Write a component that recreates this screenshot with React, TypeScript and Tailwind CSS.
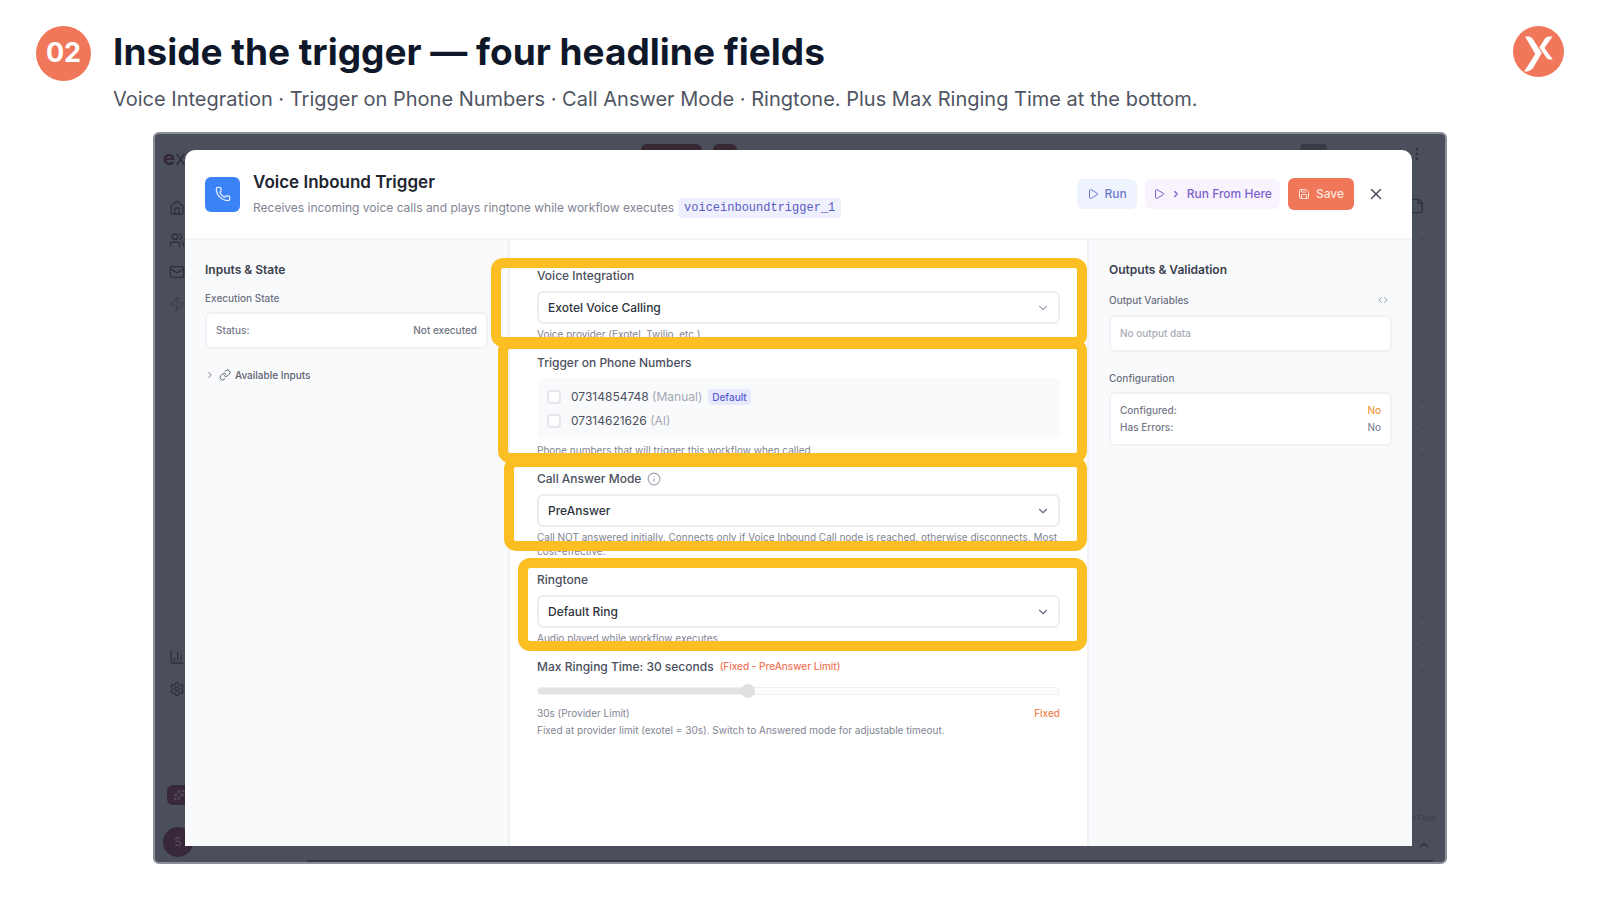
import type { ReactNode } from 'react';
import {
  BarChart3,
  ChevronDown,
  ChevronRight,
  ChevronUp,
  Code,
  EllipsisVertical,
  File,
  House,
  Info,
  Link,
  Mail,
  Phone,
  Play,
  Save,
  Settings,
  Sparkles,
  Users,
  X,
  Zap,
} from 'lucide-react';

interface FieldProps {
  id: string;
  label: string;
  options: string[];
  help: string;
  info?: boolean;
  faded?: boolean;
  ring: string;
}

const numbers = [
  { id: 'manual', number: '07314854748', kind: '(Manual)', isDefault: true },
  { id: 'ai', number: '07314621626', kind: '(AI)', isDefault: false },
];

function Highlight({ className }: { className: string }) {
  return (
    <span
      aria-hidden="true"
      className={`pointer-events-none absolute -right-[27px] rounded-xl border-10 border-[#fbbf24] ${className}`}
    />
  );
}

function SelectField({ id, label, options, help, info, faded, ring }: FieldProps) {
  return (
    <div className="relative">
      <div className="flex h-4 items-center gap-1.5">
        <label htmlFor={id} className="text-xs font-medium text-[#4b5060]">
          {label}
        </label>
        {info && <Info className="size-3.5 text-[#a3a7b3]" />}
      </div>
      <div className="relative mt-[7px]">
        <select
          id={id}
          className="h-[33px] w-full appearance-none rounded-md border-2 border-[#ebecf1] bg-white px-[9px] text-xs font-medium text-[#2f3440]"
        >
          {options.map((o) => (
            <option key={o}>{o}</option>
          ))}
        </select>
        <ChevronDown
          className={`pointer-events-none absolute top-2.5 right-2.5 size-3.5 ${faded ? 'text-[#a3a7b3]' : 'text-[#6b7080]'}`}
        />
      </div>
      <p className="mt-[3px] text-[10px] leading-[14px] text-[#7f8492]">{help}</p>
      <Highlight className={ring} />
    </div>
  );
}

function Row({ label, value, color }: { label: string; value: string; color: string }) {
  return (
    <div className="flex justify-between">
      <span>{label}</span>
      <span className={color}>{value}</span>
    </div>
  );
}

function Card({ children }: { children: ReactNode }) {
  return (
    <div className="rounded-md border-2 border-[#f1f2f5] bg-white px-[9px] py-2 text-[10px] leading-[17px] font-medium text-[#747986]">
      {children}
    </div>
  );
}

// the dimmed app that stays visible around the modal
function Backdrop() {
  return (
    <div
      aria-hidden="true"
      className="absolute inset-0 overflow-hidden rounded-md border-2 border-[#8b8f99] bg-[#4b4f5b] text-[#2f303e]"
    >
      <div className="absolute inset-y-0 left-0 flex w-12 flex-col">
        <span className="mt-2.5 ml-2 text-xl leading-7 font-bold">
          <span className="text-[#33283a]">e</span>
          <span className="font-normal">x</span>
        </span>
        <div className="mt-7 ml-3.5 flex flex-col gap-4">
          <House className="size-4" />
          <Users className="size-4" />
          <Mail className="size-4" />
          <Zap className="size-4 text-[#3d404d]" />
        </div>
        <div className="mt-auto ml-3.5 flex flex-col gap-4">
          <BarChart3 className="size-4" />
          <Settings className="size-4" />
        </div>
        <div className="mt-[88px] ml-3 flex h-5 items-center rounded-md bg-[#37283a] pl-1.5">
          <Sparkles className="size-3 text-[#5b5060]" />
        </div>
        <div className="mt-[22px] mb-[5px] ml-2 flex size-[30px] items-center justify-center rounded-full bg-[#37283a] text-xs text-[#5b5060]">
          S
        </div>
      </div>
      <div className="absolute top-2.5 left-[486px] flex gap-[11px]">
        <span className="h-8 w-[61px] rounded-md bg-[#372833]" />
        <span className="h-8 w-6 rounded-md bg-[#372833]" />
      </div>
      <span className="absolute top-2.5 right-[118px] h-8 w-[27px] rounded-sm bg-[#383b46]" />
      <div className="absolute inset-y-0 right-2 flex w-6 flex-col">
        <EllipsisVertical className="mt-3 -ml-1 size-4" />
        <File className="mt-9 -ml-1 size-4" />
        <div className="mt-6 ml-2 flex flex-col gap-[25px]">
          {Array.from({ length: 17 }, (_, i) => (
            <span key={i} className="size-0.5 rounded-full bg-[#3d404c]" />
          ))}
        </div>
        <span className="mt-auto text-[8px] leading-4 whitespace-nowrap text-[#393c48]">t Flow</span>
        <ChevronUp className="mt-3 mb-2.5 ml-1 size-3.5" />
      </div>
      <span className="absolute right-3 bottom-0 left-[152px] h-0.5 bg-[#363944]" />
    </div>
  );
}

export default function App() {
  return (
    <div className="flex min-h-screen flex-col bg-white pb-9 font-[Inter,sans-serif]">
      <header className="flex items-start px-9 pt-[26px]">
        <span className="flex size-[55px] shrink-0 items-center justify-center rounded-full bg-[#f0775a] text-[27px] font-bold text-white">
          02
        </span>
        <div className="ml-[22px] flex-1">
          <h1 className="text-[37px] leading-[52px] font-bold text-[#0f172a]">
            Inside the trigger — four headline fields
          </h1>
          <p className="mt-2 text-xl leading-[26px] text-[#4f5562]">
            Voice Integration · Trigger on Phone Numbers · Call Answer Mode · Ringtone. Plus Max Ringing Time at the
            bottom.
          </p>
        </div>
        <svg viewBox="0 0 51 51" className="size-[51px] shrink-0" role="img" aria-label="Exotel">
          <circle cx="25.5" cy="25.5" r="25.5" fill="#f0775a" />
          <path d="M12 10.5 H15.5 Q18 10.5 19.5 12.5 L28.8 27 L20 42 Q17.5 45.5 11 45.8 L22.3 28 Z" fill="#fff" />
          <path d="M39.5 10.5 L31.5 22 L39.8 33.5 H36.8 Q34.5 33.5 33 31 L26.3 21.5 L32 12.5 Q33.5 10.5 36 10.5 Z" fill="#fff" />
        </svg>
      </header>

      <main className="relative mx-[153px] mt-5 flex flex-1 flex-col pt-[18px] pr-[35px] pb-[18px] pl-8">
        <Backdrop />
        <section className="relative flex flex-1 flex-col rounded-t-[10px] bg-white">
          <div className="flex h-[90px] items-center border-b-2 border-[#f3f4f6] px-5">
            <span className="flex size-[35px] items-center justify-center rounded-md bg-[#3b82f6] text-[#dbe8fe]">
              <Phone className="size-4" />
            </span>
            <div className="ml-[13px]">
              <h2 className="text-[17px] leading-6 font-semibold text-[#20242f]">Voice Inbound Trigger</h2>
              <div className="mt-1 flex h-5 items-center gap-1">
                <p className="text-xs text-[#7f8492]">
                  Receives incoming voice calls and plays ringtone while workflow executes
                </p>
                <code className="rounded-sm bg-[#eef1fd] px-1.5 font-['Liberation_Mono',monospace] text-xs leading-5 text-[#5b5bc4]">
                  voiceinboundtrigger_1
                </code>
              </div>
            </div>
            <div className="ml-auto flex items-center gap-2 text-xs font-medium">
              <button className="flex h-[30px] items-center gap-1.5 rounded-md bg-[#eef3fe] px-2.5 text-[#6f7bd0]">
                <Play className="size-3" />
                Run
              </button>
              <button className="flex h-[30px] items-center gap-1.5 rounded-md bg-[#f9f3fe] px-2 text-[#7d63cc]">
                <Play className="size-3" />
                <ChevronRight className="size-2.5" strokeWidth={3} />
                Run From Here
              </button>
              <button className="flex h-8 items-center gap-1.5 rounded-md bg-[#f0775a] px-2.5 text-[#fde6de]">
                <Save className="size-3" />
                Save
              </button>
              <button aria-label="Close" className="mr-[7px] ml-[5px] text-[#4b5060]">
                <X className="size-[18px]" />
              </button>
            </div>
          </div>

          <div className="flex flex-1">
            <aside className="w-[325px] shrink-0 border-r-2 border-[#f0f1f4] bg-[#f9fafc] px-5 pt-[22px]">
              <h3 className="text-xs leading-4 font-semibold text-[#3b404d]">Inputs &amp; State</h3>
              <h4 className="mt-3 mb-1.5 text-[10px] leading-4 font-medium text-[#6b7080]">Execution State</h4>
              <Card>
                <Row label="Status:" value="Not executed" color="text-[#6f7482]" />
              </Card>
              <button className="mt-[18px] flex items-center gap-1 text-[10px] leading-4 font-medium text-[#5d6270]">
                <ChevronRight className="size-2.5" />
                <Link className="size-3" />
                Available Inputs
              </button>
            </aside>

            <div className="flex-1 px-[27px] pt-7">
              <form className="flex flex-col gap-3.5">
                <SelectField
                  id="integration"
                  label="Voice Integration"
                  options={['Exotel Voice Calling']}
                  help="Voice provider (Exotel, Twilio, etc.)"
                  faded
                  ring="-top-2.5 -bottom-1.5 -left-[46px]"
                />

                <fieldset className="relative">
                  <legend className="text-xs leading-4 font-medium text-[#4b5060]">Trigger on Phone Numbers</legend>
                  <div className="mt-[7px] flex h-[61px] flex-col justify-center gap-2 rounded-md bg-[#f9fafb] px-2.5">
                    {numbers.map((n) => (
                      <div key={n.id} className="flex h-4 items-center text-xs">
                        <input
                          id={n.id}
                          type="checkbox"
                          className="size-3.5 appearance-none rounded-sm border-2 border-[#e6e7ec] bg-white"
                        />
                        <label htmlFor={n.id} className="ml-2.5 text-[#4b5060]">
                          {n.number} <span className="text-[#a3a7b3]">{n.kind}</span>
                        </label>
                        {n.isDefault && (
                          <span className="ml-1.5 rounded-sm bg-[#e6eafc] px-1 text-[10px] leading-4 font-medium text-[#5b5bd0]">
                            Default
                          </span>
                        )}
                      </div>
                    ))}
                  </div>
                  <p className="mt-1 text-[10px] leading-[14px] text-[#7f8492]">
                    Phone numbers that will trigger this workflow when called
                  </p>
                  <Highlight className="-top-8 -bottom-1.5 -left-[39px]" />
                </fieldset>

                <SelectField
                  id="mode"
                  label="Call Answer Mode"
                  options={['PreAnswer']}
                  help="Call NOT answered initially. Connects only if Voice Inbound Call node is reached, otherwise disconnects. Most cost-effective."
                  info
                  ring="-top-3.5 bottom-[7px] -left-[33px]"
                />

                <SelectField
                  id="ringtone"
                  label="Ringtone"
                  options={['Default Ring']}
                  help="Audio played while workflow executes"
                  ring="-top-3.5 -bottom-1.5 -left-[19px]"
                />

                <div className="text-[10px] leading-[14px] text-[#7f8492]">
                  <label htmlFor="ringing" className="flex h-4 items-center gap-1.5 text-xs font-medium text-[#4b5060]">
                    Max Ringing Time: 30 seconds
                    <span className="text-[10px] text-[#f0775a]">(Fixed - PreAnswer Limit)</span>
                  </label>
                  <input
                    id="ringing"
                    type="range"
                    min={10}
                    max={60}
                    defaultValue={30}
                    className="mt-[9px] block h-3.5 w-full appearance-none bg-transparent [&::-webkit-slider-runnable-track]:h-2 [&::-webkit-slider-runnable-track]:rounded-full [&::-webkit-slider-runnable-track]:border [&::-webkit-slider-runnable-track]:border-[#eeeeef] [&::-webkit-slider-runnable-track]:bg-[linear-gradient(to_right,#e2e2e3_40%,#fcfcfd_40%)] [&::-webkit-slider-thumb]:-mt-1 [&::-webkit-slider-thumb]:size-3.5 [&::-webkit-slider-thumb]:appearance-none [&::-webkit-slider-thumb]:rounded-full [&::-webkit-slider-thumb]:bg-[#dfdfe1]"
                  />
                  <div className="mt-2 flex justify-between">
                    <span>30s (Provider Limit)</span>
                    <span className="font-medium text-[#ee8352]">Fixed</span>
                  </div>
                  <p className="mt-[3px]">
                    Fixed at provider limit (exotel = 30s). Switch to Answered mode for adjustable timeout.
                  </p>
                </div>
              </form>
            </div>

            <aside className="w-[325px] shrink-0 border-l-2 border-[#f0f1f4] bg-[#f9fafc] px-5 pt-[22px]">
              <h3 className="text-xs leading-4 font-semibold text-[#3b404d]">Outputs &amp; Validation</h3>
              <div className="mt-3.5 mb-[7px] flex items-center justify-between">
                <h4 className="text-[10px] leading-4 font-medium text-[#6b7080]">Output Variables</h4>
                <button aria-label="Show code" className="mr-1 text-[#7f8492]">
                  <Code className="size-2.5" />
                </button>
              </div>
              <Card>
                <p className="text-[#a9adb8]">No output data</p>
              </Card>
              <h4 className="mt-[18px] mb-1.5 text-[10px] leading-4 font-medium text-[#6b7080]">Configuration</h4>
              <Card>
                <Row label="Configured:" value="No" color="text-[#eb9a3e]" />
                <Row label="Has Errors:" value="No" color="text-[#868b99]" />
              </Card>
            </aside>
          </div>
        </section>
      </main>
    </div>
  );
}
